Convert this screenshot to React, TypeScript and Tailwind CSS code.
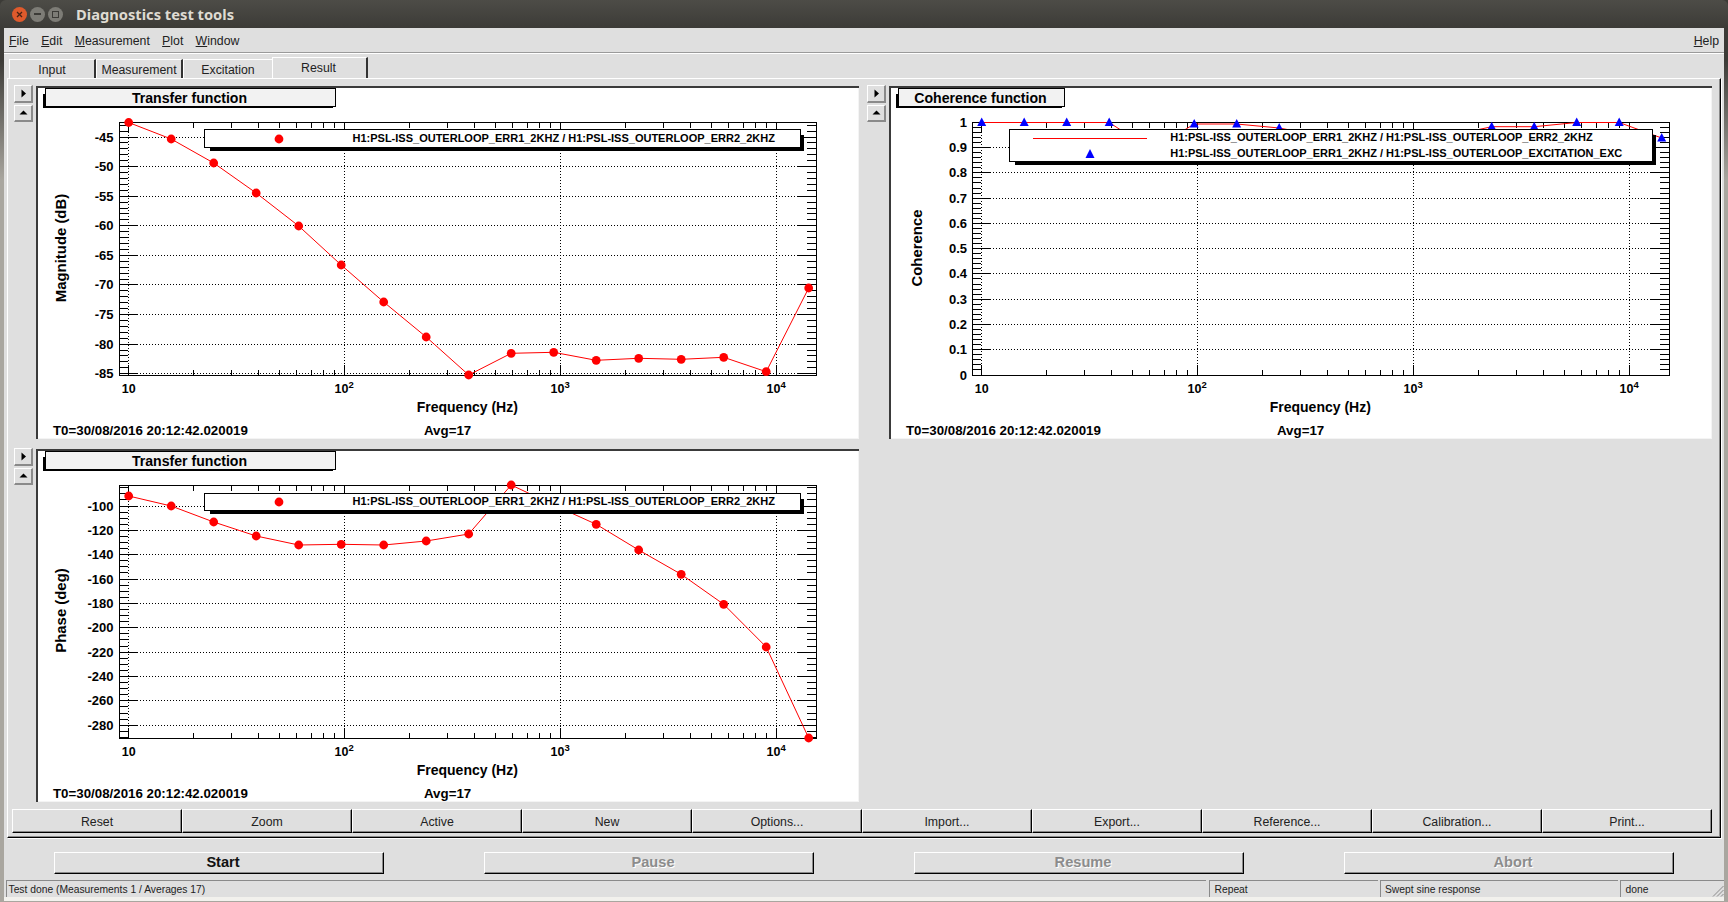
import React from "react";

type Pt = [number, number];

const magY = (v: number) => 51 + (-45 - v) * 5.917;
const phaseY = (v: number) => 57 + (-100 - v) * 1.218;
const cohY = (v: number) => 289 - v * 252.7;

const range = (from: number, to: number, step: number) => {
  const out: number[] = [];
  for (let v = from; v <= to + 1e-6; v += step) out.push(v);
  return out;
};

const pointX = (i: number) => 92.7 + 42.5 * i;
const toPts = (ys: number[]): Pt[] => ys.map((y, i) => [pointX(i), y]);

// real pixel y minus canvas top
const magData = toPts([36.5, 53, 77, 107, 140, 179, 216, 251, 289, 267.3, 266.3, 274.3, 272.3, 273.3, 271.3, 285.7, 202]);
const phaseData = toPts([47, 57, 73, 87, 96, 95.3, 96, 92, 85, 36, 56, 75.3, 101, 125.3, 155.3, 198, 289]);
const cohLine = toPts([36.5, 36.5, 36.5, 36.5, 64, 38, 38, 42, 50, 50, 50, 50, 40.7, 40.7, 36.5, 36.5, 52]);

const LEGEND_A = "H1:PSL-ISS_OUTERLOOP_ERR1_2KHZ / H1:PSL-ISS_OUTERLOOP_ERR2_2KHZ";
const LEGEND_B = "H1:PSL-ISS_OUTERLOOP_ERR1_2KHZ / H1:PSL-ISS_OUTERLOOP_EXCITATION_EXC";

const triangle = (x: number, y: number) => `${x},${y - 5} ${x + 4.5},${y + 3.5} ${x - 4.5},${y + 3.5}`;

function PlotSvg(props: {
  yMajor: { label: string; y: number }[];
  yMinor: number[];
  yTitle: string;
  yTitleX: number;
  yTitleY: number;
  yLabelX: number;
  data: Pt[];
  dots?: boolean;
  triangles?: Pt[];
}) {
  const { yMajor, yMinor, yTitle, yTitleX, yTitleY, yLabelX, data, dots, triangles } = props;
  const decades = [92.7, 308.7, 524.7, 740.7];
  const minors: number[] = [];
  for (const d of decades) {
    for (const m of [2, 3, 4, 5, 6, 7, 8, 9]) {
      const x = d + 216 * Math.log10(m);
      if (x < 780) minors.push(x);
    }
  }
  const snap = (n: number) => Math.floor(n) + 0.5;

  return (
    <svg width={823} height={353} className="block">
      <g stroke="#000" strokeWidth={1} shapeRendering="crispEdges" fill="none">
        {/* grid */}
        {decades.map((x) => (
          <line key={x} x1={snap(x)} x2={snap(x)} y1={37} y2={289} strokeDasharray="1 2" />
        ))}
        {yMajor.map((t) => (
          <line key={t.label} x1={83} x2={780} y1={snap(t.y)} y2={snap(t.y)} strokeDasharray="1 2" />
        ))}
        <rect x={83.5} y={36.5} width={697} height={253} />
        {/* x ticks */}
        {decades.map((x) => (
          <g key={x}>
            <line x1={snap(x)} x2={snap(x)} y1={37} y2={47} />
            <line x1={snap(x)} x2={snap(x)} y1={279} y2={289} />
          </g>
        ))}
        {minors.map((x) => (
          <g key={x}>
            <line x1={snap(x)} x2={snap(x)} y1={37} y2={42} />
            <line x1={snap(x)} x2={snap(x)} y1={284} y2={289} />
          </g>
        ))}
        {/* y ticks */}
        {yMajor.map((t) => (
          <g key={t.label}>
            <line x1={83} x2={101} y1={snap(t.y)} y2={snap(t.y)} />
            <line x1={762} x2={780} y1={snap(t.y)} y2={snap(t.y)} />
          </g>
        ))}
        {yMinor.map((y) => (
          <g key={y}>
            <line x1={83} x2={92} y1={snap(y)} y2={snap(y)} />
            <line x1={771} x2={780} y1={snap(y)} y2={snap(y)} />
          </g>
        ))}
      </g>

      <polyline points={data.map((p) => p.join(",")).join(" ")} fill="none" stroke="#ff0000" strokeWidth={1} />
      {dots && data.map((p) => <circle key={p[0]} cx={p[0]} cy={p[1]} r={4.4} fill="#ff0000" />)}
      {triangles && triangles.map((p) => <polygon key={p[0]} points={triangle(p[0], p[1])} fill="#0000ff" />)}

      <g fontWeight={700} fill="#000">
        {yMajor.map((t) => (
          <text key={t.label} x={yLabelX} y={t.y + 4.5} textAnchor="end" fontSize={13}>
            {t.label}
          </text>
        ))}
        <text x={92.7} y={307} textAnchor="middle" fontSize={12.5}>
          10
        </text>
        {[
          [308.7, "2"],
          [524.7, "3"],
          [740.7, "4"],
        ].map(([x, e]) => (
          <text key={e} x={Number(x) - 0.5} y={307} textAnchor="middle" fontSize={12.5}>
            10
            <tspan fontSize={9.5} dy={-5}>
              {e}
            </tspan>
          </text>
        ))}
        <text x={431.3} y={326} textAnchor="middle" fontSize={14}>
          Frequency (Hz)
        </text>
        <text x={17} y={349} fontSize={13.3}>
          T0=30/08/2016 20:12:42.020019
        </text>
        <text x={388} y={349} fontSize={13.3}>
          Avg=17
        </text>
        <text transform={`translate(${yTitleX} ${yTitleY}) rotate(-90)`} textAnchor="middle" fontSize={14.9}>
          {yTitle}
        </text>
      </g>
    </svg>
  );
}

function PlotTitle({ text, className }: { text: string; className: string }) {
  return (
    <div className={`absolute top-[2px] h-[20px] ${className}`}>
      <div className="absolute -left-[2px] top-[6px] bottom-0 right-[3px] bg-black" />
      <div className="absolute inset-x-0 top-0 h-[18.5px] pt-[1.5px] pr-[2px] border border-black bg-[#f2f2f2] flex items-center justify-center font-bold text-[14.1px] text-black leading-none">
        {text}
      </div>
    </div>
  );
}

function ArrowButton({ dir }: { dir: "right" | "up" }) {
  return (
    <div className="w-[19px] h-[17.5px] flex items-center justify-center border-t border-l border-white border-b-2 border-r-2 border-b-[#8a8a8a] border-r-[#8a8a8a] bg-[#dfdfdf]">
      <svg width={9} height={9} viewBox="0 0 9 9">
        <polygon points={dir === "right" ? "2.5,0.5 7,4.5 2.5,8.5" : "0.5,6.5 8.5,6.5 4.5,2.5"} fill="#000" />
      </svg>
    </div>
  );
}

function PlotCell({ children }: { children: React.ReactNode }) {
  return (
    <div className="flex gap-[3px] w-[845px]">
      <div className="flex flex-col gap-[2px] w-[19px]">
        <ArrowButton dir="right" />
        <ArrowButton dir="up" />
      </div>
      <div className="relative mt-px w-[823px] h-[353px] bg-white shadow-[inset_2px_2px_0_#3a3a3a,inset_-1px_-1px_0_#f4f4f4]">
        {children}
      </div>
    </div>
  );
}

function Legend({ className, children }: { className: string; children: React.ReactNode }) {
  return (
    <div
      className={`absolute border border-black bg-white font-bold text-[11px] text-black leading-none shadow-[4.5px_4.5px_0_-1.5px_#000] ${className}`}
    >
      {children}
    </div>
  );
}

function SingleLegend({ top }: { top: string }) {
  return (
    <Legend className={`left-[167.5px] w-[597px] h-[18.5px] flex items-center pl-[148px] ${top}`}>
      <svg width={10} height={10} className="absolute left-[69px] top-[3.5px]">
        <circle cx={5} cy={5} r={4.4} fill="#ff0000" />
      </svg>
      {LEGEND_A}
    </Legend>
  );
}

function RaisedButton({ label }: { label: string }) {
  return (
    <div className="h-[24px] pt-[2px] flex items-center justify-center border-t border-l border-white border-b border-r border-b-black border-r-black shadow-[inset_-1px_-1px_0_#8a8a8a] text-[12.3px] text-[#222]">
      {label}
    </div>
  );
}

function RunButton({ label, disabled }: { label: string; disabled?: boolean }) {
  return (
    <div
      className={
        disabled
          ? "w-[330px] h-[22px] pl-[8px] flex items-center justify-center border-t border-l border-white border-b border-r border-b-black border-r-black shadow-[inset_-1px_-1px_0_#8a8a8a] font-bold text-[14.6px] text-[#8c8c8c] [text-shadow:1px_1px_0_#fff]"
          : "w-[330px] h-[22px] pl-[8px] flex items-center justify-center border-t border-l border-white border-b border-r border-b-black border-r-black shadow-[inset_-1px_-1px_0_#8a8a8a] font-bold text-[14.6px] text-[#111]"
      }
    >
      {label}
    </div>
  );
}

function StatusCell({ className, children }: { className: string; children?: React.ReactNode }) {
  return (
    <div className={`relative h-[17px] pt-[1px] flex items-center border-t border-l border-[#8a8a8a] text-[10.3px] text-[#222] ${className}`}>
      {children}
    </div>
  );
}

function Underlined({ first, rest }: { first: string; rest: string }) {
  return (
    <span>
      <span className="underline">{first}</span>
      {rest}
    </span>
  );
}

export default function App() {
  const magMajor = range(-85, -45, 5)
    .reverse()
    .map((v) => ({ label: String(v), y: magY(v) }));
  const magMinor = range(-85, -43, 1).map(magY);
  const phaseMajor = range(-280, -100, 20)
    .reverse()
    .map((v) => ({ label: String(v), y: phaseY(v) }));
  const phaseMinor = range(-290, -85, 5).map(phaseY);
  const cohMajor = range(0, 10, 1)
    .reverse()
    .map((v) => ({ label: v === 10 ? "1" : v === 0 ? "0" : (v / 10).toFixed(1), y: cohY(v / 10) }));
  const cohMinor = range(0, 50, 1).map((v) => cohY(v / 50));
  const cohTriangles = toPts([36.5, 36.5, 36.5, 36.5, 60, 38, 38, 42, 60, 60, 60, 60, 40.7, 40.7, 36.5, 36.5, 52]);

  return (
    <div className="w-[1728px] h-[902px] overflow-hidden flex flex-col bg-[linear-gradient(to_bottom,#3c3b37_0px,#3c3b37_60px,#a9a69f_180px)] font-['Liberation_Sans',sans-serif]">
      {/* title bar */}
      <div className="h-[28px] flex items-center bg-[linear-gradient(to_bottom,#4d4c47,#3c3b37)] rounded-t-[6px] pl-[12px]">
        <div className="w-[15px] h-[15px] rounded-full bg-[#df5a2c] flex items-center justify-center">
          <svg width={7} height={7} viewBox="0 0 7 7">
            <path d="M1 1 L6 6 M6 1 L1 6" stroke="#4a2314" strokeWidth={1.3} />
          </svg>
        </div>
        <div className="ml-[3px] w-[15px] h-[15px] rounded-full bg-[#7d7c76] flex items-center justify-center">
          <div className="w-[7px] h-[1.5px] bg-[#3c3b37]" />
        </div>
        <div className="ml-[3px] w-[15px] h-[15px] rounded-full bg-[#7d7c76] flex items-center justify-center">
          <div className="w-[7px] h-[7px] border border-[#3c3b37]" />
        </div>
        <div className="ml-[13px] font-['Noto_Sans',sans-serif] font-bold text-[14.7px] text-[#dfdbd2] leading-none">
          Diagnostics test tools
        </div>
      </div>

      {/* window body */}
      <div className="ml-[4px] w-[1720px] h-[873px] bg-[#dfdfdf] flex flex-col">
        <div className="h-[25px] pt-[3px] flex items-center pl-[5px] border-b border-[#9a9a9a] shadow-[0_1px_0_#fff] text-[12.3px] text-[#222]">
          <div className="flex gap-[12.3px]">
            <Underlined first="F" rest="ile" />
            <Underlined first="E" rest="dit" />
            <Underlined first="M" rest="easurement" />
            <Underlined first="P" rest="lot" />
            <Underlined first="W" rest="indow" />
          </div>
          <div className="ml-auto pr-[5px]">
            <Underlined first="H" rest="elp" />
          </div>
        </div>

        {/* tabs */}
        <div className="h-[25px] flex items-end pl-[5px] text-[12.3px] text-[#222]">
          <div className="w-[87px] h-[19px] pt-[2px] flex items-center justify-center border-t border-l border-white border-r-2 border-r-[#333]">
            Input
          </div>
          <div className="w-[87px] h-[19px] pt-[2px] flex items-center justify-center border-t border-l border-white border-r-2 border-r-[#333]">
            Measurement
          </div>
          <div className="w-[89px] h-[19px] pt-[2px] flex items-center justify-center border-t border-l border-white">
            Excitation
          </div>
          <div className="w-[96px] h-[21px] pr-[2px] flex items-center justify-center border-t border-l border-white border-r-2 border-r-[#333]">
            Result
          </div>
        </div>

        {/* main frame */}
        <div className="ml-[3px] w-[1714px] h-[760px] border-t border-l border-white border-r border-r-black border-b border-b-black shadow-[inset_-1px_-1px_0_#8a8a8a,1px_1px_0_#fff] pl-[6px] pt-[6px] flex flex-col">
          <div className="flex gap-[8px]">
            <PlotCell>
              <PlotSvg
                yMajor={magMajor}
                yMinor={magMinor}
                yTitle="Magnitude (dB)"
                yTitleX={30}
                yTitleY={162}
                yLabelX={77.5}
                data={magData}
                dots
              />
              <PlotTitle text="Transfer function" className="left-[9px] w-[291px]" />
              <SingleLegend top="top-[43px]" />
            </PlotCell>
            <PlotCell>
              <PlotSvg
                yMajor={cohMajor}
                yMinor={cohMinor}
                yTitle="Coherence"
                yTitleX={33}
                yTitleY={162}
                yLabelX={78}
                data={cohLine}
                triangles={cohTriangles}
              />
              <PlotTitle text="Coherence function" className="left-[9px] w-[167px]" />
              <Legend className="left-[120.3px] top-[43.3px] w-[644px] h-[33px] pl-[160px] flex flex-col justify-center gap-[5px]">
                <svg width={114} height={3} className="absolute left-[23px] top-[6.5px]">
                  <line x1={0} x2={114} y1={1.5} y2={1.5} stroke="#ff0000" strokeWidth={1} />
                </svg>
                <svg width={12} height={12} className="absolute left-[74px] top-[17.5px]">
                  <polygon points="6,1 10.5,10 1.5,10" fill="#0000ff" />
                </svg>
                <div>{LEGEND_A}</div>
                <div>{LEGEND_B}</div>
              </Legend>
            </PlotCell>
          </div>
          <div className="mt-[9px]">
            <PlotCell>
              <PlotSvg
                yMajor={phaseMajor}
                yMinor={phaseMinor}
                yTitle="Phase (deg)"
                yTitleX={30}
                yTitleY={161.5}
                yLabelX={77.5}
                data={phaseData}
                dots
              />
              <PlotTitle text="Transfer function" className="left-[9px] w-[291px]" />
              <SingleLegend top="top-[43.5px]" />
            </PlotCell>
          </div>
          <div className="mt-[7px] -ml-[2px] w-[1700px] grid grid-cols-10">
            {["Reset", "Zoom", "Active", "New", "Options...", "Import...", "Export...", "Reference...", "Calibration...", "Print..."].map(
              (b) => (
                <RaisedButton key={b} label={b} />
              ),
            )}
          </div>
        </div>

        {/* start row */}
        <div className="h-[42px] pt-[14px] pl-[50px] flex gap-[100px]">
          <RunButton label="Start" />
          <RunButton label="Pause" disabled />
          <RunButton label="Resume" disabled />
          <RunButton label="Abort" disabled />
        </div>

        {/* status bar */}
        <div className="flex gap-[2.5px] pl-[2px]">
          <StatusCell className="w-[1200px] pl-[1.5px]">Test done (Measurements 1 / Averages 17)</StatusCell>
          <StatusCell className="w-[169px] pl-[5px]">Repeat</StatusCell>
          <StatusCell className="w-[237.5px] pl-[4px]">Swept sine response</StatusCell>
          <StatusCell className="w-[104px] pl-[4.5px]">
            done
            <svg width={12} height={12} className="absolute right-0 bottom-0">
              <path d="M11.5 1 L1 11.5 M11.5 5 L5 11.5 M11.5 9 L9 11.5" stroke="#8a8a8a" strokeWidth={1} />
            </svg>
          </StatusCell>
        </div>
        <div className="h-[4px] bg-[#f2f1ed]" />
      </div>
    </div>
  );
}
